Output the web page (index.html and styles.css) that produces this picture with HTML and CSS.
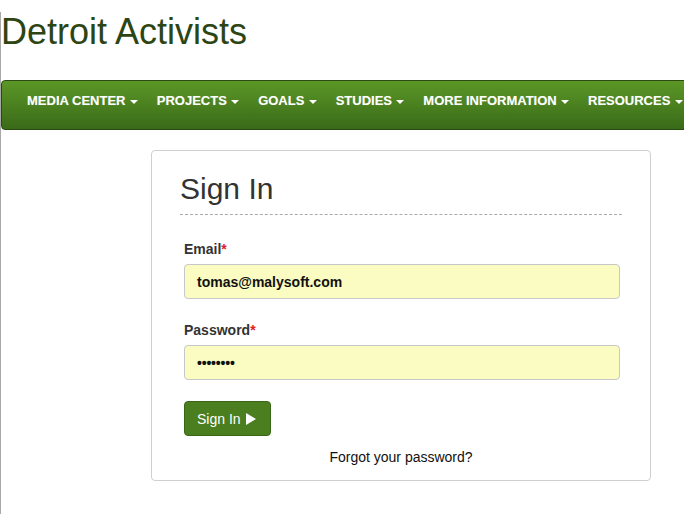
FILE: index.html
```html
<!DOCTYPE html>
<html>
<head>
<meta charset="utf-8">
<link rel="stylesheet" href="styles.css">
</head>
<body>
<div class="page">
  <h1 class="site-title">Detroit Activists</h1>
  <nav class="navbar">
    <ul class="nav">
      <li class="nav-item">MEDIA CENTER <span class="caret"></span></li>
      <li class="nav-item">PROJECTS <span class="caret"></span></li>
      <li class="nav-item">GOALS <span class="caret"></span></li>
      <li class="nav-item">STUDIES <span class="caret"></span></li>
      <li class="nav-item">MORE INFORMATION <span class="caret"></span></li>
      <li class="nav-item">RESOURCES <span class="caret"></span></li>
    </ul>
  </nav>
  <div class="card">
    <h2 class="card-title">Sign In</h2>
    <form class="form">
      <label class="label">Email<span class="req">*</span></label>
      <div class="input">tomas@malysoft.com</div>
      <label class="label label-pw">Password<span class="req">*</span></label>
      <div class="input input-pw">&#8226;&#8226;&#8226;&#8226;&#8226;&#8226;&#8226;&#8226;</div>
      <div class="btn-row">
        <button type="button" class="btn">Sign In <svg class="play" width="10" height="12" viewBox="0 0 10 12"><polygon points="0,0 10,6 0,12" fill="#fff"/></svg></button>
      </div>
      <div class="forgot">Forgot your password?</div>
    </form>
  </div>
</div>
</body>
</html>
```
FILE: styles.css
```css
html, body {
  margin: 0;
  padding: 0;
  height: 100%;
  overflow: hidden;
  background: #fff;
}
body {
  font-family: "Liberation Sans", Arial, sans-serif;
}
.page {
  min-height: 100%;
  border-left: 1px solid #a8a8a8;
  box-sizing: border-box;
}
.site-title {
  margin: 12px 0 0 0;
  font-size: 36px;
  font-weight: normal;
  line-height: 40px;
  color: #2c4513;
}
.navbar {
  margin-top: 28px;
  width: 740px;
  height: 50px;
  box-sizing: border-box;
  border: 1px solid #2a4a10;
  border-radius: 4px;
  background: linear-gradient(#5b9726, #3a6a19);
}
.nav {
  list-style: none;
  margin: 0;
  padding: 0 0 0 15.5px;
  display: flex;
  white-space: nowrap;
}
.nav-item {
  padding: 10px 9.5px 0 9.5px;
  line-height: 19px;
  font-size: 13px;
  font-weight: bold;
  color: #fff;
  text-shadow: 0 0 1px rgba(255,255,255,0.3);
}
.caret {
  display: inline-block;
  width: 0;
  height: 0;
  margin-left: 0.7px;
  vertical-align: middle;
  border-top: 4px solid #fff;
  border-left: 4px solid transparent;
  border-right: 4px solid transparent;
}
.card {
  margin: 20px 0 0 150px;
  width: 500px;
  height: 331px;
  box-sizing: border-box;
  border: 1px solid #cfcfcf;
  border-radius: 4px;
  padding: 22px 28px 0 28px;
}
.card-title {
  margin: 0;
  font-size: 30px;
  font-weight: normal;
  line-height: 32px;
  color: #333;
  padding-bottom: 9px;
  border-bottom: 1px dashed #aaa;
}
.form {
  margin: 24px 2px 0 4px;
  display: flex;
  flex-direction: column;
}
.label {
  font-size: 14px;
  font-weight: bold;
  line-height: 20px;
  color: #333;
}
.req {
  color: #e02020;
}
.label-pw {
  margin-top: 21px;
}
.input {
  margin-top: 5px;
  height: 35px;
  box-sizing: border-box;
  border: 1px solid #c8c8c8;
  border-radius: 4px;
  background: #fafcc1;
  padding: 0 12px;
  display: flex;
  align-items: center;
  font-size: 14px;
  font-weight: bold;
  color: #111;
}
.input-pw {
  font-size: 14px;
  letter-spacing: -0.2px;
}
.btn-row {
  margin-top: 21px;
  display: flex;
}
.btn {
  height: 35px;
  box-sizing: border-box;
  padding: 0 14px 0 12px;
  border: 1px solid #3a6617;
  border-radius: 4px;
  background: #4a7e1e;
  color: #fff;
  font-family: "Liberation Sans", Arial, sans-serif;
  font-size: 14px;
  display: flex;
  align-items: center;
  gap: 5px;
}
.play {
  display: block;
}
.forgot {
  margin-top: 11px;
  text-align: center;
  font-size: 14px;
  line-height: 20px;
  color: #111;
  margin-left: -4px;
  margin-right: -2px;
}
```
